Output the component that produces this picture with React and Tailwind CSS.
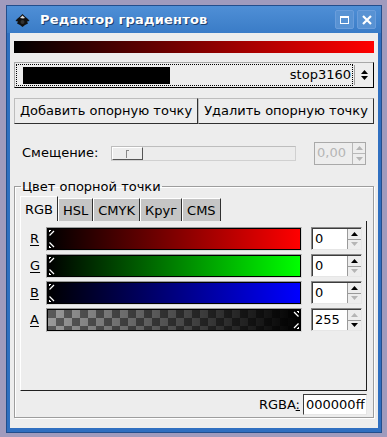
import React from "react";

const font = { fontFamily: '"DejaVu Sans", sans-serif' };

const Marker = ({ side = "left" }) => (
  <>
    <svg
      className={`absolute top-[1px] ${side === "left" ? "left-[1px]" : "right-[1px] -scale-x-100"}`}
      width="6"
      height="6"
      viewBox="0 0 6 6"
    >
      <path d="M0.5 5.5 L5 1" stroke="#fff" strokeWidth="1.2" />
      <path d="M0 0 H2 V1 H1 V2 H0 Z" fill="#fff" />
    </svg>
    <svg
      className={`absolute bottom-[1px] ${side === "left" ? "left-[1px]" : "right-[1px] -scale-x-100"}`}
      width="6"
      height="6"
      viewBox="0 0 6 6"
    >
      <path d="M0.5 0.5 L5 5" stroke="#fff" strokeWidth="1.2" />
      <path d="M0 6 H2 V5 H1 V4 H0 Z" fill="#fff" />
    </svg>
  </>
);

const Arrow = ({ dir, disabled }) => (
  <svg width="7" height="4" viewBox="0 0 7 4">
    {dir === "up" ? (
      <path d="M0 4 L3.5 0 L7 4 Z" fill={disabled ? "#b5b5b5" : "#000"} />
    ) : (
      <path d="M0 0 L3.5 4 L7 0 Z" fill={disabled ? "#b5b5b5" : "#000"} />
    )}
  </svg>
);

const Spin = ({ value, upOff, downOff }) => (
  <div className="flex h-[23px] w-[51px] border border-[#8a8a8a] border-r-[#e6e6e6] border-b-[#e6e6e6] bg-white">
    <div className="flex flex-1 items-center border-t border-l border-[#3c3c3c] pl-[2px] text-[13px] text-black">
      {value}
    </div>
    <div className="flex w-[14px] flex-col border-t border-[#3c3c3c] bg-[#ededed]">
      <div className="flex flex-1 items-center justify-center border-b border-l border-[#9a9a9a]">
        <Arrow dir="up" disabled={upOff} />
      </div>
      <div className="flex flex-1 items-center justify-center border-l border-[#9a9a9a]">
        <Arrow dir="down" disabled={downOff} />
      </div>
    </div>
  </div>
);

const ColorRow = ({ label, bar, value, upOff, downOff, alpha }) => (
  <div className="flex h-[27px] items-center">
    <div className="w-[25px] pl-[9px] text-[13px] text-black underline underline-offset-2">{label}</div>
    <div className="flex h-[24px] w-[256px] border border-[#d8d8d8] border-t-[#9a9a9a] border-l-[#9a9a9a]">
      <div className={`relative flex-1 border border-black ${bar}`}>
        <Marker side={alpha ? "right" : "left"} />
      </div>
    </div>
    <div className="ml-[9px]">
      <Spin value={value} upOff={upOff} downOff={downOff} />
    </div>
  </div>
);

const tabs = ["RGB", "HSL", "CMYK", "Круг", "CMS"];

export default function App() {
  return (
    <div className="h-[437px] w-[387px] overflow-hidden bg-[#a09bbd] pt-[5px] pl-[6px]" style={font}>
      <div className="flex h-[428px] w-[376px] flex-col border border-[#224e8c] bg-[#2f6fc0]">
        {/* title bar */}
        <div className="flex h-[27px] items-center bg-[linear-gradient(to_bottom,#4f8fd6,#3a7cc7)] pl-[8px] pr-[5px]">
          <svg width="15" height="13" viewBox="0 0 15 13" className="mt-[1px]">
            <path d="M7.5 0 L10 2.5 L13 5 L14.5 7 L12 7.5 L13 9.5 L10 11 L7.5 13 L5 11 L2 9.5 L3 7.5 L0.5 7 L2 5 L5 2.5 Z" fill="#111" />
            <path d="M5 4 L7.5 1.5 L10 4 L8 4.5 Z" fill="#ddd" />
            <circle cx="7.5" cy="8" r="2" fill="#333" />
          </svg>
          <span className="ml-[10px] text-[13px] font-bold tracking-[0.2px] text-white [text-shadow:1px_1px_0_#1c3f6e]">
            Редактор градиентов
          </span>
          <div className="ml-auto flex gap-[3px]">
            <div className="flex h-[19px] w-[19px] items-center justify-center rounded-[2px] border border-[#6a9ddb] bg-[#5892d3]">
              <div className="h-[8px] w-[9px] border-[1.5px] border-t-2 border-white" />
            </div>
            <div className="flex h-[19px] w-[19px] items-center justify-center rounded-[2px] border border-[#6a9ddb] bg-[#5892d3]">
              <svg width="10" height="10" viewBox="0 0 10 10">
                <path d="M1 1 L9 9 M9 1 L1 9" stroke="#fff" strokeWidth="2.2" />
              </svg>
            </div>
          </div>
        </div>

        {/* content */}
        <div className="mx-[3px] flex h-[395px] flex-col bg-[#ededed] px-[4px] text-[13px] text-black">
          <div className="mt-[8px] h-[12px] bg-[linear-gradient(to_right,#000,#ff0000)]" />

          {/* stop combo */}
          <div className="mt-[9px] flex h-[26px] border border-[#a8a8a8] border-r-black border-b-black bg-[#ededed]">
            <div className="m-[1px] flex flex-1 items-center border border-dotted border-black pl-[6px] pr-[1px]">
              <div className="h-[17px] w-[147px] bg-black" />
              <span className="ml-auto">stop3160</span>
            </div>
            <div className="my-[2px] w-px bg-[#a0a0a0]" />
            <div className="flex w-[18px] flex-col items-center justify-center gap-[2px]">
              <Arrow dir="up" />
              <Arrow dir="down" />
            </div>
          </div>

          {/* buttons */}
          <div className="mt-[10px] flex h-[26px]">
            <div className="flex w-[184px] items-center justify-center border border-[#bdbdbd] border-r-[#303030] border-b-[#303030]">
              Добавить опорную точку
            </div>
            <div className="flex flex-1 items-center justify-center border border-[#bdbdbd] border-r-[#303030] border-b-[#303030]">
              Удалить опорную точку
            </div>
          </div>

          {/* offset */}
          <div className="mt-[18px] flex h-[22px] items-center">
            <span className="ml-[8px] w-[89px]">Смещение:</span>
            <div className="flex h-[15px] w-[185px] border border-[#d0d0d0] border-t-[#bdbdbd] border-l-[#bdbdbd] bg-[#ececec]">
              <div className="flex h-full w-[31px] items-center justify-center border border-white border-r-[#555] border-b-[#555] bg-[#ededed]">
                <div className="mt-[2px] h-[8px] w-[3px] border-t border-l border-[#888]" />
              </div>
            </div>
            <div className="ml-[18px] flex h-[23px] w-[52px] border border-[#a9a9a9] bg-[#ededed]">
              <div className="flex flex-1 items-center pl-[2px] text-[#b5b5b5]">0,00</div>
              <div className="flex w-[13px] flex-col border-l border-[#b8b8b8]">
                <div className="flex flex-1 items-center justify-center border-b border-[#b8b8b8]">
                  <Arrow dir="up" disabled />
                </div>
                <div className="flex flex-1 items-center justify-center">
                  <Arrow dir="down" disabled />
                </div>
              </div>
            </div>
          </div>

          {/* color frame */}
          <fieldset className="mt-[15px] h-[239px] border border-[#9d9d9d] px-[5px] shadow-[inset_1px_1px_0_#fff,1px_1px_0_#fff]">
            <legend className="ml-[1px] px-[1px] leading-[15px]">Цвет опорной точки</legend>
            <div className="mt-[2px] flex h-[25px] items-end">
              {tabs.map((t, i) => (
                <div
                  key={t}
                  className={
                    i === 0
                      ? "flex h-[25px] w-[38px] items-center justify-center border-t border-l border-white border-r border-r-[#303030] bg-[#ededed] pt-[1px]"
                      : "flex h-[23px] items-center justify-center border-t border-l border-white border-r border-r-[#303030] bg-[#c5c5c5] px-[4px] pt-[1px]"
                  }
                >
                  {t}
                </div>
              ))}
            </div>
            <div className="flex h-[170px] w-[347px] flex-col border-l border-white border-r border-r-[#202020] border-b border-b-[#202020] pt-[4px]">
              <ColorRow label="R" bar="bg-[linear-gradient(to_right,#000,#ff0000)]" value="0" downOff />
              <ColorRow label="G" bar="bg-[linear-gradient(to_right,#000,#00ff00)]" value="0" downOff />
              <ColorRow label="B" bar="bg-[linear-gradient(to_right,#000,#0000ff)]" value="0" downOff />
              <ColorRow
                label="A"
                alpha
                bar="bg-[linear-gradient(to_right,rgba(0,0,0,0),#000),repeating-conic-gradient(#9a9a9a_0_25%,#595959_0_50%)] [background-size:100%_100%,16px_16px]"
                value="255"
                upOff
              />
            </div>
            <div className="mt-[3px] flex w-[347px] items-center justify-end">
              <span className="mr-[3px]">
                RGBA<span className="underline">:</span>
              </span>
              <div className="flex h-[21px] w-[64px] items-center border border-[#3c3c3c] border-r-[#e6e6e6] border-b-[#e6e6e6] bg-white pl-[2px]">
                000000ff
              </div>
            </div>
          </fieldset>
        </div>
      </div>
    </div>
  );
}
